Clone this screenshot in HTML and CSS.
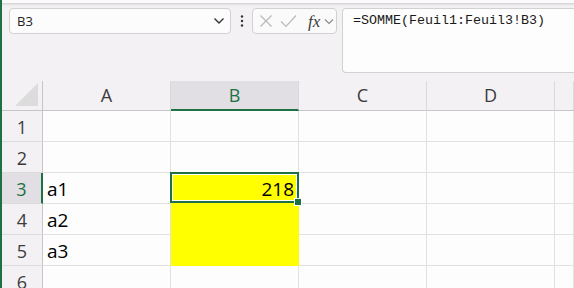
FILE: index.html
```
<!DOCTYPE html>
<html lang="fr">

<head>
    <meta charset="UTF-8">
    <meta name="viewport" content="width=device-width, initial-scale=1.0">
    <title>Classeur</title>
    <link rel="stylesheet" href="styles.css">
</head>

<body>

    <div class="ribbon-edge"></div>

    <div class="formula-row">
        <div class="name-box">
            <span>B3</span>
            <svg width="12" height="8" viewBox="0 0 12 8"><polyline points="1.5,1.5 6,6 10.5,1.5" fill="none" stroke="#333" stroke-width="1.4"/></svg>
        </div>
        <div class="dots">
            <svg width="4" height="12" viewBox="0 0 4 12"><circle cx="2" cy="1.5" r="1.2" fill="#333"/><circle cx="2" cy="6" r="1.2" fill="#333"/><circle cx="2" cy="10.5" r="1.2" fill="#333"/></svg>
        </div>
        <div class="fx-box">
            <svg width="14" height="14" viewBox="0 0 14 14"><path d="M1.5 1.5 L12.5 12.5 M12.5 1.5 L1.5 12.5" stroke="#b9b9b9" stroke-width="1.2"/></svg>
            <svg width="17" height="14" viewBox="0 0 17 14"><polyline points="1,7.5 6,12.5 16,1.5" fill="none" stroke="#b9b9b9" stroke-width="1.2"/></svg>
            <span class="fx">fx</span>
            <svg width="10" height="7" viewBox="0 0 10 7"><polyline points="1,1.5 5,5.5 9,1.5" fill="none" stroke="#8a8a8a" stroke-width="1.1"/></svg>
        </div>
        <div class="formula">=SOMME(Feuil1:Feuil3!B3)</div>
    </div>

    <div class="sheet">
        <div class="corner">
            <svg width="24" height="24" viewBox="0 0 24 24"><polygon points="23,0 23,23 0,23" fill="#dcdcdc"/></svg>
        </div>
        <div class="col-head">A</div>
        <div class="col-head active">B</div>
        <div class="col-head">C</div>
        <div class="col-head">D</div>
        <div class="col-head"></div>

        <div class="row-head">1</div>
        <div class="cell"></div><div class="cell"></div><div class="cell"></div><div class="cell"></div><div class="cell"></div>

        <div class="row-head">2</div>
        <div class="cell"></div><div class="cell"></div><div class="cell"></div><div class="cell"></div><div class="cell"></div>

        <div class="row-head active">3</div>
        <div class="cell">a1</div>
        <div class="cell yellow num selected">218<span class="sel"><span class="handle"></span></span></div>
        <div class="cell"></div><div class="cell"></div><div class="cell"></div>

        <div class="row-head">4</div>
        <div class="cell">a2</div>
        <div class="cell yellow"></div>
        <div class="cell"></div><div class="cell"></div><div class="cell"></div>

        <div class="row-head">5</div>
        <div class="cell">a3</div>
        <div class="cell yellow"></div>
        <div class="cell"></div><div class="cell"></div><div class="cell"></div>

        <div class="row-head">6</div>
        <div class="cell"></div><div class="cell"></div><div class="cell"></div><div class="cell"></div><div class="cell"></div>
    </div>

</body>

</html>
```

FILE: styles.css
```
body {
    margin: 0;
    width: 572px;
    height: 288px;
    overflow: hidden;
    background-color: #f3f1f4;
    border-left: 2px solid #1e7145;
    font-family: 'Open Sans', 'Noto Sans', sans-serif;
}

.ribbon-edge {
    height: 3px;
    background-color: #fafafa;
    border-bottom: 1px solid #d6d6d6;
    box-shadow: 0 1px 2px rgba(0, 0, 0, 0.08);
}

/* Formula bar */
.formula-row {
    display: flex;
    align-items: flex-start;
    padding: 4px 0 0 7px;
    height: 69px;
    box-sizing: border-box;
}

.name-box {
    width: 222px;
    height: 26px;
    box-sizing: border-box;
    display: flex;
    align-items: center;
    justify-content: space-between;
    padding: 0 5px 0 7px;
    background-color: #fcfcfd;
    border: 1px solid #d1d1d1;
    border-radius: 4px;
    font-size: 13px;
    color: #222;
}

.dots {
    width: 21px;
    height: 26px;
    display: flex;
    align-items: center;
    justify-content: center;
}

.fx-box {
    width: 85px;
    height: 26px;
    box-sizing: border-box;
    display: flex;
    align-items: center;
    gap: 7px;
    padding-left: 6px;
    background-color: #fafafa;
    border: 1px solid #d1d1d1;
    border-radius: 4px;
}

.fx-box .fx {
    font-family: 'Liberation Serif', serif;
    font-style: italic;
    font-size: 17px;
    color: #3c3c3c;
    margin-left: 4px;
    margin-right: -3px;
    line-height: 1;
}

.formula {
    flex: 1;
    height: 65px;
    margin-left: 5px;
    box-sizing: border-box;
    padding: 3px 0 0 10px;
    background-color: #fcfdfc;
    border: 1px solid #d1d1d1;
    border-right: none;
    border-radius: 4px 0 0 4px;
    font-family: 'Liberation Mono', monospace;
    font-size: 13.33px;
    line-height: 17px;
    color: #1a1a1a;
}

/* Sheet grid */
.sheet {
    margin-top: 8px;
    display: grid;
    grid-template-columns: 41px repeat(4, 128px) 1fr;
    grid-template-rows: 30px repeat(6, 31px);
}

.corner {
    display: flex;
    align-items: flex-end;
    justify-content: flex-end;
    padding: 0 3px 3px 0;
    border-right: 1px solid #c6c6c6;
    border-bottom: 1px solid #c6c6c6;
}

.col-head {
    border-right: 1px solid #d9d9d9;
    border-bottom: 1px solid #c6c6c6;
    text-align: center;
    font-size: 18px;
    line-height: 29px;
    color: #3b3b3b;
}

.col-head.active {
    background-color: #e1dfe3;
    border-bottom: 2px solid #1e7145;
    color: #1e7145;
}

.row-head {
    border-right: 1px solid #c6c6c6;
    border-bottom: 1px solid #dcdcdc;
    text-align: center;
    font-size: 18px;
    line-height: 32px;
    color: #3b3b3b;
}

.row-head.active {
    background-color: #e1dfe3;
    border-right: 2px solid #1e7145;
    color: #1e7145;
}

.cell {
    background-color: #fcfdfc;
    border-right: 1px solid #e1e1e1;
    border-bottom: 1px solid #e1e1e1;
    padding: 0 4px;
    font-size: 19px;
    line-height: 33px;
    color: #000;
    white-space: nowrap;
}

.cell.yellow {
    background-color: #ffff00;
    border-right-color: #ffff00;
    border-bottom-color: #ffff00;
}

.cell.num {
    text-align: right;
}

.cell.selected {
    position: relative;
}

.sel {
    position: absolute;
    top: -1px;
    left: -1px;
    right: -1px;
    bottom: 0;
    border: 2px solid #1e7145;
    box-shadow: inset 0 0 0 1px #ffffff;
}

.handle {
    position: absolute;
    right: -5px;
    bottom: -5px;
    width: 6px;
    height: 6px;
    background-color: #1e7145;
    border: 1px solid #ffffff;
}
```
